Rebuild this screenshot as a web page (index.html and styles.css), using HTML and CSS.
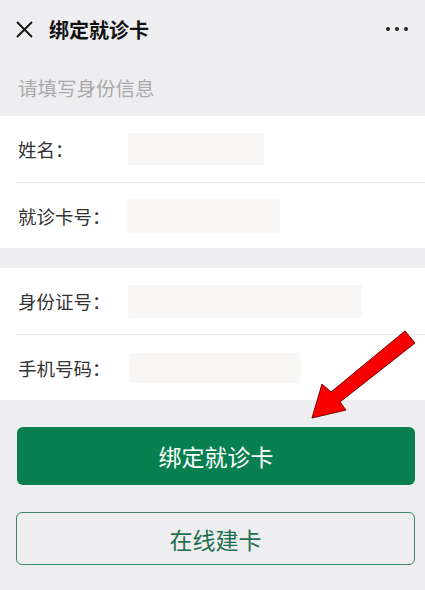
FILE: index.html
```html
<!DOCTYPE html>
<html lang="zh-CN">
<head>
  <meta charset="UTF-8">
  <title>绑定就诊卡</title>
  <link rel="stylesheet" href="styles.css">
</head>
<body>

<div class="page">
  <div class="topbar">
    <svg class="close" width="17" height="17" viewBox="0 0 17 17">
      <path d="M1 1 L16 16 M16 1 L1 16" stroke="#111" stroke-width="1.8" fill="none"/>
    </svg>
    <span class="title">绑定就诊卡</span>
    <span class="more">
      <i></i><i></i><i></i>
    </span>
  </div>

  <div class="hint">请填写身份信息</div>

  <div class="group">
    <div class="row">
      <span class="label">姓名：</span>
      <span class="field w1"></span>
    </div>
    <div class="row">
      <span class="label">就诊卡号：</span>
      <span class="field w2"></span>
    </div>
  </div>

  <div class="group">
    <div class="row">
      <span class="label">身份证号：</span>
      <span class="field w3"></span>
    </div>
    <div class="row">
      <span class="label">手机号码：</span>
      <span class="field w4"></span>
    </div>
  </div>

  <div class="actions">
    <button class="btn primary">绑定就诊卡</button>
    <button class="btn outline">在线建卡</button>
  </div>

  <!-- red pointer drawn over the page -->
  <svg class="arrow" width="125" height="110" viewBox="300 320 125 110">
    <polygon points="312,418 322,384 331,392 405,331 415,343 340,402 346,410"
             fill="#f80000" stroke="#7a0000" stroke-width="1" stroke-linejoin="miter"/>
  </svg>
</div>

</body>
</html>
```

FILE: styles.css
```css
body {
  margin: 0;
  background: #eeeef1;
  font-family: "Noto Sans CJK SC", "Noto Sans", sans-serif;
  color: #333;
}

.page {
  position: relative;
  width: 425px;
  height: 590px;
  overflow: hidden;
}

.topbar {
  height: 58px;
  display: flex;
  align-items: center;
  padding: 0 17px 0 16px;
}

.close {
  display: block;
}

.title {
  margin-left: 16px;
  font-size: 20px;
  font-weight: bold;
  color: #111;
}

.more {
  margin-left: auto;
  display: flex;
  gap: 5px;
}

.more i {
  width: 4px;
  height: 4px;
  border-radius: 50%;
  background: #222;
}

.hint {
  height: 58px;
  display: flex;
  align-items: center;
  padding-left: 18px;
  font-size: 19.5px;
  color: #a9a9ac;
}

.group {
  background: #fff;
  margin-bottom: 20px;
}

.row {
  height: 66px;
  display: flex;
  align-items: center;
  padding-left: 18px;
}

.row + .row {
  border-top: 1px solid #e4e4e6;
  margin-left: 16px;
  padding-left: 2px;
  height: 65px;
}

.label {
  width: 110px;
  font-size: 18.5px;
  color: #333;
}

.field {
  height: 32px;
  background: #f9f6f6;
  border-radius: 2px;
}

.w1 { width: 136px; }
.w2 { width: 153px; height: 34px; margin-left: -1px; }
.w3 { width: 234px; height: 33px; }
.w4 { width: 171px; height: 30px; margin-left: 2px; }

.actions {
  padding: 7px 10px 0 16px;
  display: flex;
  flex-direction: column;
  gap: 27px;
}

.btn {
  font-family: inherit;
  font-size: 23px;
  border-radius: 6px;
  cursor: pointer;
}

.primary {
  height: 58px;
  margin-left: 1px;
  border: none;
  background: #077f4f;
  color: #fff;
}

.outline {
  height: 53px;
  border: 1.5px solid #3c8568;
  background: #eeeef1;
  color: #1f6f4e;
}

.arrow {
  position: absolute;
  left: 300px;
  top: 320px;
}
```
